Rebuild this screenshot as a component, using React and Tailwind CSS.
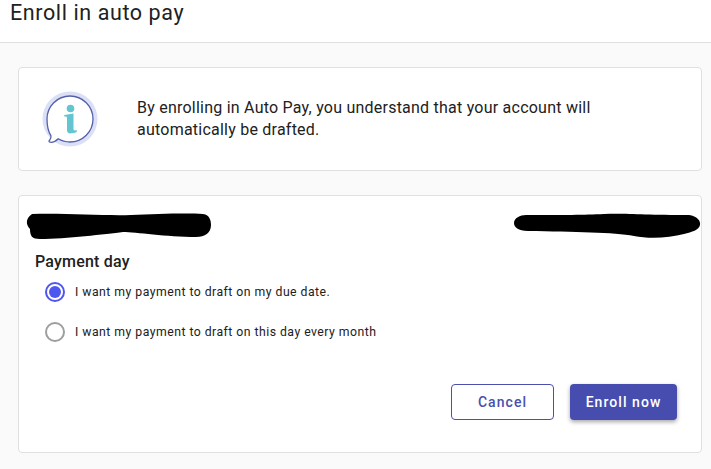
function InfoBubble() {
  return (
    <svg width="56" height="56" viewBox="0 0 56 56" fill="none" className="shrink-0">
      <circle cx="28" cy="28" r="27.5" fill="#dbe0f6" />
      <path
        d="M28 5C40.7 5 51 15.3 51 28S40.7 51 28 51C23.6 51 19.6 49.9 16.2 47.8C13.5 50.6 10 51.6 8 51.2C6.6 50.9 7 49.8 7.7 49C8.7 47.8 9.2 46.4 9 44.9C6.4 40.9 5 34.6 5 28C5 15.3 15.3 5 28 5Z"
        fill="#fff"
        stroke="#5560ab"
        strokeWidth="1.3"
      />
      <circle cx="28.5" cy="17.5" r="3.8" fill="#63c5d0" />
      <path
        d="M22.2 24L31.5 22.4V38C31.5 39.6 33 39.7 34.6 39L34.8 41C32.5 42 29.8 42.4 27.8 42.4C25.6 42.4 25 40.8 25 39V27C25 25.8 24 25.4 22.2 25.5Z"
        fill="#63c5d0"
      />
    </svg>
  )
}

function Radio({ checked, label }) {
  return (
    <label className="flex items-center gap-[10px] h-5">
      <span className={`w-5 h-5 rounded-full border-2 bg-white flex items-center justify-center ${checked ? "border-[#4f56f0]" : "border-[#9e9e9e]"}`}>
        {checked && <span className="w-3 h-3 rounded-full bg-[#4f56f0]" />}
      </span>
      <span className="text-[12.25px] text-[#212121] tracking-[0.47px]">{label}</span>
    </label>
  )
}

export default function App() {
  return (
    <div className="h-[469px] w-[711px] overflow-hidden bg-[#fafafa] font-['Roboto',sans-serif] text-[#212121]">
      <header className="h-[43px] bg-white border-b border-[#e0e0e0] pl-[10px]">
        <h1 className="text-[21.5px] leading-[26px] tracking-[0.6px] text-[#212121]">Enroll in auto pay</h1>
      </header>

      <div className="pl-[18px] pr-[9px] pt-6">
        <section className="h-[104px] bg-white border border-[#e0e0e0] rounded flex items-center pl-[23px]">
          <InfoBubble />
          <p className="ml-[39px] text-[16px] leading-[22px] tracking-[0.23px] w-[500px]">
            By enrolling in Auto Pay, you understand that your account will automatically be drafted.
          </p>
        </section>

        <section className="h-[258px] mt-6 bg-white border border-[#e0e0e0] rounded pt-[17px] pl-4">
          <div className="flex justify-between items-start h-[28px]">
            <svg width="186" height="28" viewBox="0 0 186 28" className="-ml-[9px]">
              <path d="M6 1C40 0 80 3 105 2C130 1 160 0 177 1C184 2 185 8 185 12C185 20 179 24 170 24C140 24 110 19 97 19C80 21 40 26 14 26C6 26 4 23 4 16C0 12 -1 6 6 1Z" fill="#000" />
            </svg>
            <svg width="187" height="27" viewBox="0 0 187 27">
              <path d="M12 2C50 2 70 2 90 1C110 0 130 2 175 2C183 3 187 8 186 12C185 17 178 19 170 21C155 25 135 26 120 23C100 19 60 19 14 18C4 18 0 14 0 10C0 5 6 2 12 2Z" fill="#000" />
            </svg>
          </div>

          <h2 className="text-[16px] leading-5 font-medium tracking-[0.2px] mt-[11px]">Payment day</h2>

          <div className="flex flex-col gap-5 pl-[10px] mt-[10px]">
            <Radio checked label="I want my payment to draft on my due date." />
            <Radio label="I want my payment to draft on this day every month" />
          </div>

          <div className="flex justify-end gap-4 mt-[42px] pr-6">
            <button className="w-[103px] h-9 rounded border border-[#4a4fb0] bg-white text-[#4a4fb0] text-[14px] font-medium tracking-[1.05px]">
              Cancel
            </button>
            <button className="w-[107px] h-9 rounded bg-[#474daf] text-white text-[14px] font-medium tracking-[1.05px] shadow-[0_2px_4px_rgba(0,0,0,0.35)]">
              Enroll now
            </button>
          </div>
        </section>
      </div>
    </div>
  )
}
